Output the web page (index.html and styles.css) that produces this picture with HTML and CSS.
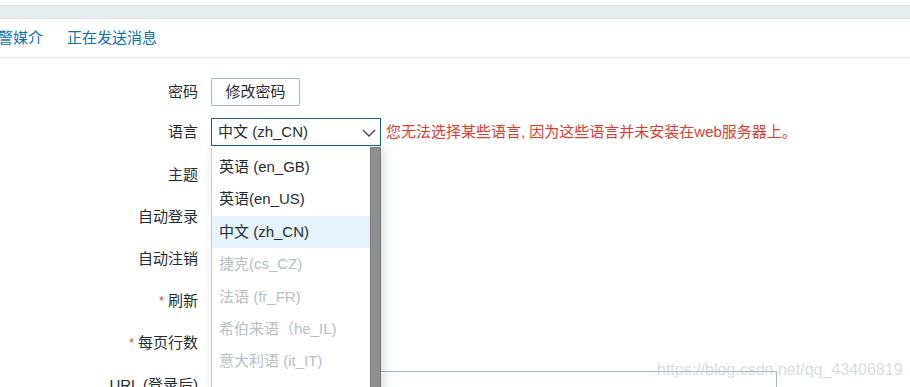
FILE: index.html
```html
<!DOCTYPE html>
<html lang="zh-CN">
<head>
    <meta charset="UTF-8">
    <title>用户设置</title>
    <link rel="stylesheet" href="styles.css">
</head>
<body>
<div class="top-strip"></div>
<div class="header-bar"></div>
<ul class="tabs">
    <li><a href="#">报警媒介</a></li>
    <li><a href="#">正在发送消息</a></li>
</ul>

<form class="settings">
    <div class="row row-password">
        <label class="label">密码</label>
        <button type="button" class="btn">修改密码</button>
    </div>

    <div class="row row-lang">
        <label class="label">语言</label>
        <div class="select-wrap">
            <div class="select">
                <span>中文 (zh_CN)</span>
                <svg class="chevron" width="14" height="8" viewBox="0 0 14 8">
                    <polyline points="1,1 7,7 13,1" fill="none" stroke="#3b4a52" stroke-width="1.4"/>
                </svg>
            </div>
            <ul class="dropdown">
                <li class="option">英语 (en_GB)</li>
                <li class="option">英语(en_US)</li>
                <li class="option selected">中文 (zh_CN)</li>
                <li class="option disabled">捷克(cs_CZ)</li>
                <li class="option disabled">法语 (fr_FR)</li>
                <li class="option disabled">希伯来语（he_IL)</li>
                <li class="option disabled">意大利语 (it_IT)</li>
            </ul>
            <div class="scrollbar"></div>
        </div>
        <span class="error">您无法选择某些语言, 因为这些语言并未安装在web服务器上。</span>
    </div>

    <div class="row">
        <label class="label">主题</label>
    </div>
    <div class="row">
        <label class="label">自动登录</label>
    </div>
    <div class="row">
        <label class="label">自动注销</label>
    </div>
    <div class="row">
        <label class="label"><span class="req">*</span>刷新</label>
    </div>
    <div class="row">
        <label class="label"><span class="req">*</span>每页行数</label>
    </div>
    <div class="row">
        <label class="label">URL (登录后)</label>
        <input class="url-input" type="text">
    </div>
</form>

<div class="watermark">https://blog.csdn.net/qq_43406819</div>
</body>
</html>
```

FILE: styles.css
```css
html, body {
    margin: 0;
    padding: 0;
    height: 387px;
    overflow: hidden;
    background: #fff;
}

body {
    font-family: "Liberation Sans", "Noto Sans CJK SC", sans-serif;
    font-size: 15px;
    color: #1f2c33;
    position: relative;
}

.top-strip {
    height: 5px;
    background: #fff;
}

.header-bar {
    height: 12px;
    background: #e9ecef;
    border-top: 1px solid #dde2e5;
    border-bottom: 1px solid #dde2e5;
}

.tabs {
    list-style: none;
    margin: 0;
    padding: 0;
    height: 38px;
    display: flex;
    align-items: center;
    gap: 24px;
    border-bottom: 1px solid #e7eaec;
}

.tabs li:first-child {
    margin-left: -17px;
}

.tabs a {
    color: #0a72b4;
    text-decoration: none;
    line-height: 20px;
}

.settings {
    padding-top: 20px;
    display: flex;
    flex-direction: column;
    gap: 14px;
}

.row {
    display: flex;
    align-items: center;
    min-height: 28px;
}

.row-password {
    margin-bottom: -2px;
}

.row-lang {
    margin-bottom: 1px;
}

.label {
    width: 198px;
    margin-right: 13px;
    text-align: right;
    line-height: 20px;
    flex-shrink: 0;
}

.req {
    color: #e8493e;
    font-size: 13px;
    margin-right: 4px;
    vertical-align: 1px;
}

.btn {
    width: 89px;
    height: 28px;
    background: #fff;
    border: 1px solid #a9b6bf;
    border-radius: 2px;
    font: inherit;
    color: #1f2c33;
    padding: 0;
    line-height: 20px;
}

.select-wrap {
    position: relative;
    width: 170px;
    height: 28px;
}

.select {
    box-sizing: border-box;
    width: 170px;
    height: 28px;
    border: 1px solid #1d5f95;
    display: flex;
    align-items: center;
    justify-content: space-between;
    padding: 0 4px 0 6px;
    line-height: 20px;
}

.chevron {
    margin-top: 1px;
}

.error {
    color: #e5392f;
    margin-left: 5px;
    line-height: 20px;
}

.dropdown {
    position: absolute;
    left: 0;
    top: 29px;
    z-index: 5;
    box-sizing: border-box;
    width: 170px;
    height: 260px;
    margin: 0;
    padding: 4px 0 0 0;
    list-style: none;
    background: #fff;
    border-left: 1px solid #c8d0d5;
    box-shadow: 3px 2px 10px rgba(40, 60, 75, 0.18);
}

.option {
    height: 32.4px;
    line-height: 32.4px;
    padding-left: 7px;
    margin-right: 11px;
    white-space: nowrap;
}

.option.selected {
    background: #e6f3fc;
}

.option.disabled {
    color: #b4c0c6;
}

.scrollbar {
    position: absolute;
    z-index: 6;
    left: 159px;
    top: 29px;
    width: 9px;
    height: 260px;
    background: #8f8f8f;
    border: 1px solid #7b7b7b;
}

.url-input {
    box-sizing: border-box;
    width: 566px;
    height: 28px;
    border: 1px solid #a7b6c0;
    background: #fff;
    padding: 0 6px;
}

.watermark {
    position: absolute;
    left: 657px;
    top: 360px;
    font-family: "Liberation Sans", sans-serif;
    font-size: 16px;
    line-height: 20px;
    color: rgba(190, 196, 200, 0.6);
    white-space: nowrap;
    z-index: 10;
}
```
